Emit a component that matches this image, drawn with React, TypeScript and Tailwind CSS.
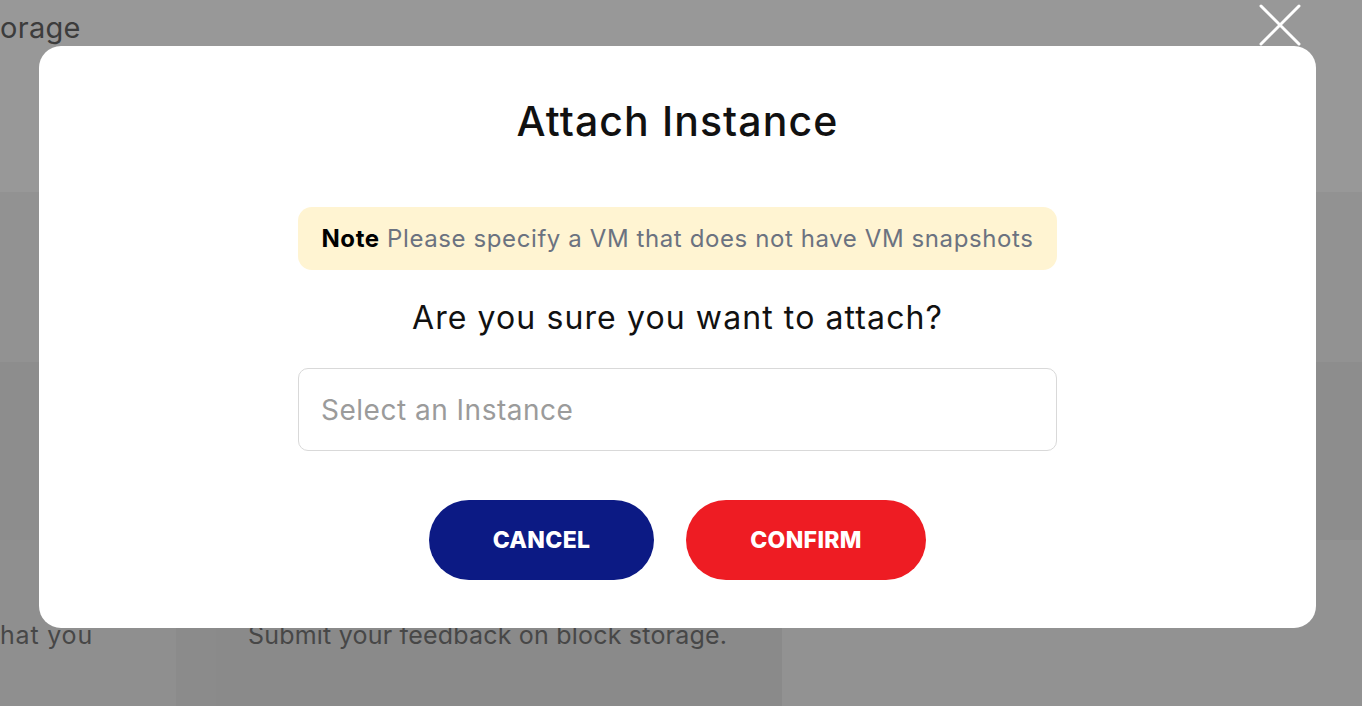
const font = { fontFamily: 'Inter, "Noto Sans", sans-serif' };

const Backdrop = () => {
    return (
        <div className="flex flex-col h-[706px] bg-[#959595]">
            <div className="h-[192px] bg-[#989898] pt-[8px]">
                <p className="text-[29px] text-[#3c3c3c] leading-[40px] tracking-[0.3px]">orage</p>
            </div>
            <div className="h-[170px] bg-[#929292]" />
            <div className="h-[178px] bg-[#8d8d8d]" />
            <div className="flex flex-1">
                <div className="w-[176px] bg-[#8f8f8f] pt-[78px]">
                    <p className="text-[25px] text-[#474747] leading-[34px] tracking-[0.8px]">hat you</p>
                </div>
                <div className="w-[40px] bg-[#8b8b8b]" />
                <div className="w-[566px] bg-[#8a8a8a] pt-[78px] pl-[32px]">
                    <p className="text-[25px] text-[#474747] leading-[34px] tracking-[0.2px] whitespace-nowrap">Submit your feedback on block storage.</p>
                </div>
                <div className="flex-1 bg-[#929292]" />
            </div>
        </div>
    );
};

const AttachModal = () => {
    return (
        <div className="absolute left-[39px] top-[46px] w-[1277px] h-[582px] bg-white rounded-[22px] flex flex-col items-center pt-[50px]">
            <h2 className="text-[41px] leading-[50px] font-medium tracking-[1.1px] text-[#111]">Attach Instance</h2>
            <div className="mt-[61px] w-[759px] h-[63px] bg-[#fff4d2] rounded-[14px] flex items-center justify-center">
                <p className="text-[24px] tracking-[0.6px] text-[#6b7280] whitespace-nowrap">
                    <span className="font-bold text-black">Note</span> Please specify a VM that does not have VM snapshots
                </p>
            </div>
            <p className="mt-[28px] text-[32px] leading-[40px] tracking-[1.1px] text-[#111]">Are you sure you want to attach?</p>
            <div className="mt-[30px] w-[759px] h-[83px] border border-[#d9d9d9] rounded-[10px] flex items-center px-[22px]">
                <span className="text-[28px] tracking-[0.5px] text-[#9b9b9b]">Select an Instance</span>
            </div>
            <div className="mt-[49px] flex gap-[32px]">
                <button className="w-[225px] h-[80px] rounded-full bg-[#0c1a84] text-white text-[23px] font-extrabold tracking-[0.3px]">
                    CANCEL
                </button>
                <button className="w-[240px] h-[80px] rounded-full bg-[#ee1c23] text-white text-[23px] font-extrabold tracking-[0.3px]">
                    CONFIRM
                </button>
            </div>
        </div>
    );
};

export default function App() {
    return (
        <div className="relative w-[1362px] h-[706px] overflow-hidden" style={font}>
            <Backdrop />
            <AttachModal />
            <button className="absolute left-[1258px] top-[3px] w-[44px] h-[44px] text-white">
                <svg viewBox="0 0 44 44" width="44" height="44" fill="none" stroke="currentColor" strokeWidth="3" strokeLinecap="round">
                    <path d="M3 3 L41 41 M41 3 L3 41" />
                </svg>
            </button>
        </div>
    );
}
